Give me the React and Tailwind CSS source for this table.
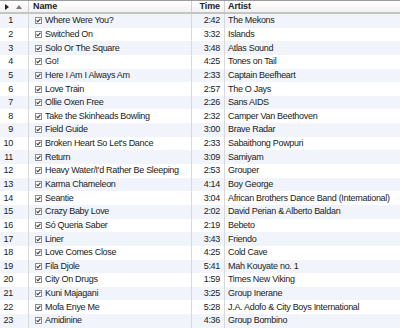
import React from "react";

const rows = [
  ["Where Were You?", "2:42", "The Mekons"],
  ["Switched On", "3:32", "Islands"],
  ["Solo Or The Square", "3:48", "Atlas Sound"],
  ["Go!", "4:25", "Tones on Tail"],
  ["Here I Am I Always Am", "2:33", "Captain Beefheart"],
  ["Love Train", "2:57", "The O Jays"],
  ["Ollie Oxen Free", "2:26", "Sans AIDS"],
  ["Take the Skinheads Bowling", "2:32", "Camper Van Beethoven"],
  ["Field Guide", "3:00", "Brave Radar"],
  ["Broken Heart So Let's Dance", "2:33", "Sabaithong Powpuri"],
  ["Return", "3:09", "Samiyam"],
  ["Heavy Water/I'd Rather Be Sleeping", "2:53", "Grouper"],
  ["Karma Chameleon", "4:14", "Boy George"],
  ["Seantie", "3:04", "African Brothers Dance Band (International)"],
  ["Crazy Baby Love", "2:02", "David Perian & Alberto Baldan"],
  ["Só Queria Saber", "2:19", "Bebeto"],
  ["Liner", "3:43", "Friendo"],
  ["Love Comes Close", "4:25", "Cold Cave"],
  ["Fila Djole", "5:41", "Mah Kouyate no. 1"],
  ["City On Drugs", "1:59", "Times New Viking"],
  ["Kuni Majagani", "3:25", "Group Inerane"],
  ["Mofa Enye Me", "5:28", "J.A. Adofo & City Boys International"],
  ["Amidinine", "4:36", "Group Bombino"],
];

function Check() {
  return (
    <svg width="7" height="7" viewBox="0 0 7 7" className="shrink-0">
      <rect x="0.5" y="0.5" width="6" height="6" fill="#fff" stroke="#8a8a8a" />
      <path d="M1.6 3.4 L2.9 4.8 L5.4 1.9" fill="none" stroke="#333" strokeWidth="1.1" />
    </svg>
  );
}

export default function App() {
  return (
    <div
      className="w-[400px] h-[328px] overflow-hidden bg-white text-[9px] tracking-[-0.3px] leading-none text-[#1a1a1a]"
      style={{ fontFamily: "'Liberation Sans', Arial, sans-serif" }}
    >
      <div className="flex h-[14px] border-t border-t-[#9c9c9c] border-b-2 border-b-[#c4c4c4] bg-gradient-to-b from-white to-[#f2f2f2] font-bold text-[#222] tracking-[-0.1px]">
        <div className="w-[29px] shrink-0 flex items-center border-r border-[#d0d0d0] pl-[5px] gap-[7px]">
          <svg width="4" height="6" viewBox="0 0 4 6">
            <path d="M0 0 L4 3 L0 6 Z" fill="#222" />
          </svg>
          <svg width="6" height="4" viewBox="0 0 6 4">
            <path d="M0 4 L3 0 L6 4 Z" fill="#777" />
          </svg>
        </div>
        <div className="w-[163px] shrink-0 flex items-center pl-[4px] border-r border-[#d0d0d0]">Name</div>
        <div className="w-[33px] shrink-0 flex items-center justify-end pr-[4px] border-r border-[#d0d0d0]">Time</div>
        <div className="flex-1 flex items-center pl-[3px]">Artist</div>
      </div>
      {rows.map((r, i) => (
        <div
          key={i}
          className={`flex h-[13.65px] ${i % 2 === 0 ? "bg-[#f1f5fb]" : "bg-white"}`}
        >
          <div className="w-[29px] shrink-0 flex items-center justify-end pr-[15px] border-r border-[#d9d9d9]">
            {i + 1}
          </div>
          <div className="w-[163px] shrink-0 flex items-center pl-[6px] gap-[3px] border-r border-[#d9d9d9] whitespace-nowrap overflow-hidden">
            <Check />
            <span>{r[0]}</span>
          </div>
          <div className="w-[33px] shrink-0 flex items-center justify-end pr-[4px] border-r border-[#d9d9d9]">
            {r[1]}
          </div>
          <div className="flex-1 flex items-center pl-[3px] whitespace-nowrap overflow-hidden">{r[2]}</div>
        </div>
      ))}
    </div>
  );
}
